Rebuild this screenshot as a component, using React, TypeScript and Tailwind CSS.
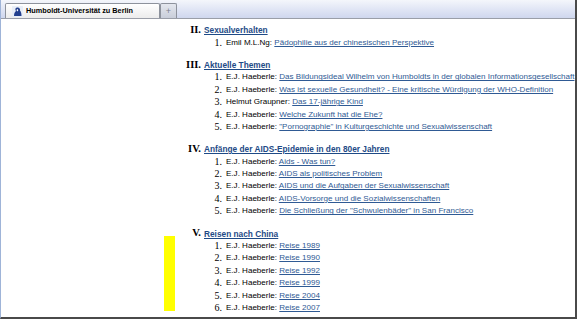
import React from "react";

type Item = { author: string; title: string };
type Section = { num: string; heading: string; items: Item[]; marker?: boolean };

const EJ = "E.J. Haeberle";

const sections: Section[] = [
  {
    num: "II.",
    heading: "Sexualverhalten",
    items: [{ author: "Emil M.L.Ng", title: "Pädophilie aus der chinesischen Perspektive" }],
  },
  {
    num: "III.",
    heading: "Aktuelle Themen",
    items: [
      { author: EJ, title: "Das Bildungsideal Wilhelm von Humboldts in der globalen Informationsgesellschaft" },
      { author: EJ, title: "Was ist sexuelle Gesundheit? - Eine kritische Würdigung der WHO-Definition" },
      { author: "Helmut Graupner", title: "Das 17-jährige Kind" },
      { author: EJ, title: "Welche Zukunft hat die Ehe?" },
      { author: EJ, title: "\"Pornographie\" in Kulturgeschichte und Sexualwissenschaft" },
    ],
  },
  {
    num: "IV.",
    heading: "Anfänge der AIDS-Epidemie in den 80er Jahren",
    items: [
      { author: EJ, title: "Aids - Was tun?" },
      { author: EJ, title: "AIDS als politisches Problem" },
      { author: EJ, title: "AIDS und die Aufgaben der Sexualwissenschaft" },
      { author: EJ, title: "AIDS-Vorsorge und die Sozialwissenschaften" },
      { author: EJ, title: "Die Schließung der \"Schwulenbäder\" in San Francisco" },
    ],
  },
  {
    num: "V.",
    heading: "Reisen nach China",
    marker: true,
    items: [
      { author: EJ, title: "Reise 1989" },
      { author: EJ, title: "Reise 1990" },
      { author: EJ, title: "Reise 1992" },
      { author: EJ, title: "Reise 1999" },
      { author: EJ, title: "Reise 2004" },
      { author: EJ, title: "Reise 2007" },
    ],
  },
];

// little Humboldt favicon
const TabIcon = () => (
  <svg width="11" height="11" viewBox="0 0 11 11">
    <rect x="0" y="0" width="11" height="11" fill="#e8eef8" />
    <path d="M2 10 C2 7 3 6 4 5 C3 4 3 2 5 1.5 C7 1 8.5 2.5 8 4.5 C9 5.5 9.5 7.5 9.5 10 Z" fill="#24408e" />
    <path d="M5 3 C6 3 6.5 4 6 5 C5.5 5.6 4.6 5.2 4.6 4.3 Z" fill="#ffffff" />
  </svg>
);

export default function App() {
  return (
    <div className="w-[577px] h-[319px] overflow-hidden bg-white flex flex-col border-l border-l-[#9fb4d8] border-r-2 border-r-[#4a4a4a] border-b-2 border-b-[#4a4a4a]">
      {/* tab strip */}
      <div className="h-[19px] shrink-0 flex items-end pl-[4px] bg-gradient-to-b from-[#f4f6fb] via-[#e1e6f5] to-[#cfd7ee] border-b border-b-[#9a9ea8]">
        <div className="w-[155px] h-[15px] flex items-center gap-[3px] pl-[6px] border border-[#8d929c] border-b-0 rounded-t-[2px] bg-gradient-to-b from-white to-[#ececec]">
          <TabIcon />
          <span className="font-['Liberation_Sans',Arial,sans-serif] font-bold text-[7.3px] leading-none text-black">
            Humboldt-Universität zu Berlin
          </span>
        </div>
        <div className="w-[17px] h-[15px] flex items-center justify-center border border-[#8d929c] border-b-0 rounded-t-[2px] bg-gradient-to-b from-[#e4e7ee] to-[#c9ceda] text-[#7d8290] text-[9px] leading-none font-['Liberation_Sans',sans-serif]">
          +
        </div>
      </div>

      {/* outline */}
      <div className="pt-[5px] pl-[180px] flex flex-col gap-[10px]">
        {sections.map((s) => (
          <div key={s.num} className="relative">
            {s.marker && <div className="absolute left-[-17px] top-[9px] w-[11px] h-[75px] bg-[#ffff00]" />}
            <div className="flex items-center h-[12.4px]">
              <span className="w-[20px] text-right font-['Liberation_Serif',serif] font-bold text-[10.5px] text-black leading-none">
                {s.num}
              </span>
              <a className="ml-[3px] font-['Liberation_Sans',Arial,sans-serif] font-bold text-[8.3px] leading-none text-[#1e4a86] underline">
                {s.heading}
              </a>
            </div>
            {s.items.map((it, i) => (
              <div key={i} className="flex items-center h-[12.4px] whitespace-nowrap">
                <span className="ml-[32px] w-[9px] text-right font-['Liberation_Serif',serif] text-[10px] leading-none text-black">
                  {i + 1}.
                </span>
                <span className="ml-[4px] font-['Liberation_Sans',Arial,sans-serif] text-[8.05px] leading-none text-black">
                  {it.author}:{" "}
                  <a className="text-[#2f5a94] underline">{it.title}</a>
                </span>
              </div>
            ))}
          </div>
        ))}
      </div>
    </div>
  );
}
